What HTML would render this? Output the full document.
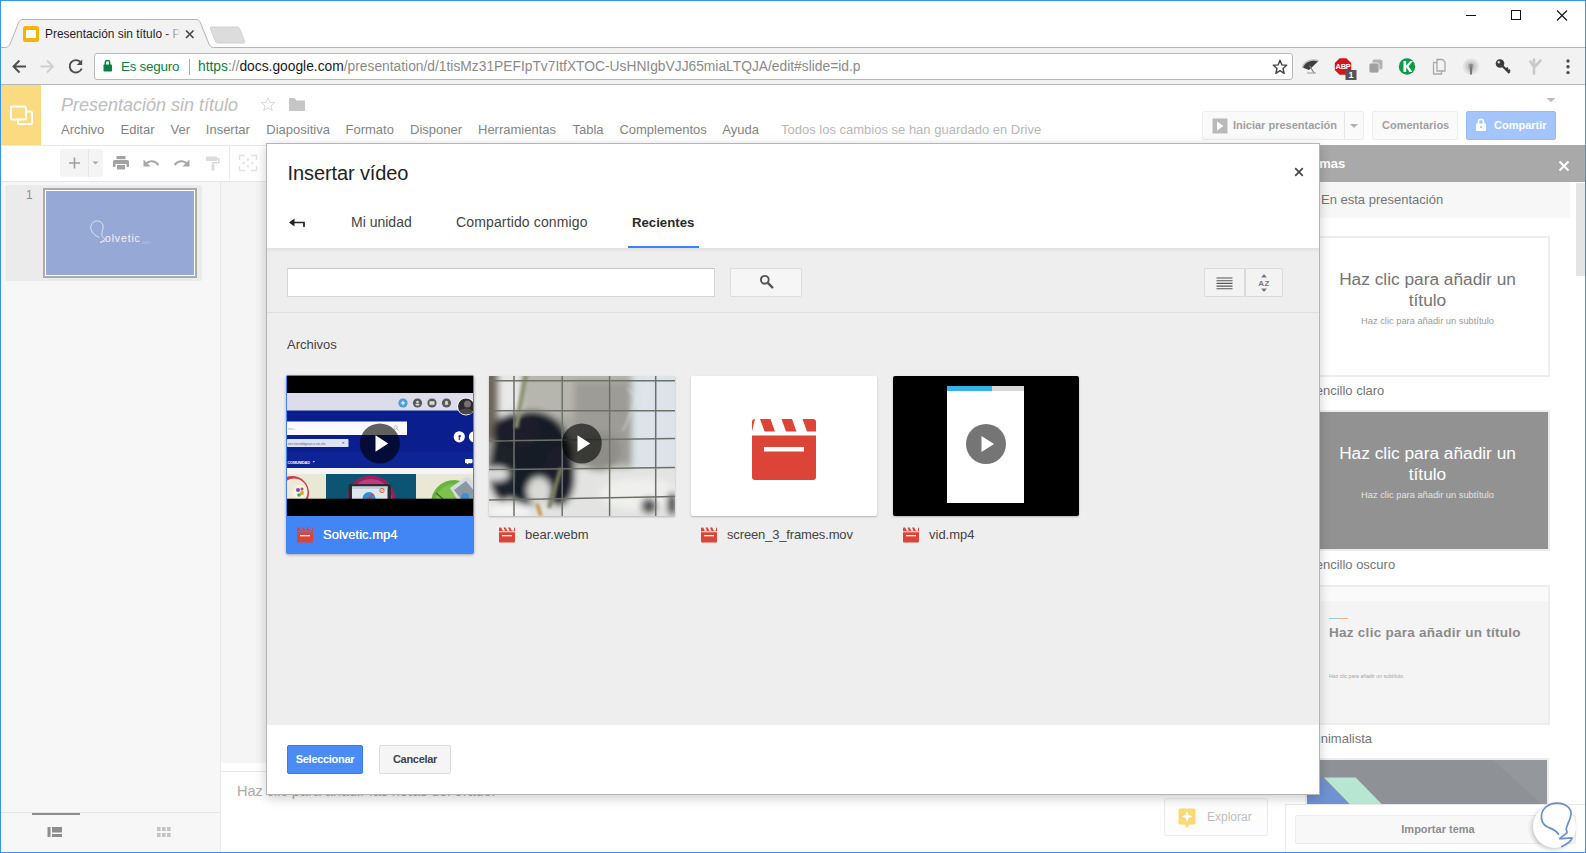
<!DOCTYPE html>
<html lang="es">
<head>
<meta charset="utf-8">
<title>Presentación sin título</title>
<style>
*{box-sizing:border-box;margin:0;padding:0}
html,body{width:1586px;height:853px;overflow:hidden;background:#fff}
body{font-family:"Liberation Sans",sans-serif;position:relative;color:#333}
.abs{position:absolute}
#win{position:absolute;left:0;top:0;width:1586px;height:853px;border:1px solid #3694ec;overflow:hidden;background:#fff}
/* chrome */
#tabstrip{left:0;top:0;width:1584px;height:46px;background:#fff}
#chrometb{left:0;top:46px;width:1584px;height:38px;background:#f2f2f2;border-bottom:1px solid #b8b6b8}
#urlbox{left:93px;top:52px;width:1199px;height:27px;background:#fff;border:1px solid #b9b9b9;border-radius:3px}
.ut{position:absolute;top:4px;font-size:14.5px;line-height:17px;white-space:nowrap}
/* app */
#apphead{left:0;top:84px;width:1584px;height:61px;background:#fff}
#logo{left:0;top:84px;width:40px;height:60px;background:#fbdb81}
.menu{position:absolute;top:122px;font-size:13px;line-height:14px;color:#838383;white-space:nowrap}
#tb{left:0;top:144px;width:1584px;height:37px;background:#fff;border-top:1px solid #e8e8e8;border-bottom:1px solid #e6e6e6}
#film{left:0;top:181px;width:220px;height:630px;background:#f7f7f7;border-right:1px solid #e9e9e9}
#filmfoot{left:0;top:811px;width:220px;height:41px;background:#f7f7f7;border-top:1px solid #e4e4e4;border-right:1px solid #e9e9e9}
#canvas{left:220px;top:181px;width:1100px;height:581px;background:#f5f5f5}
#notes{left:220px;top:770px;width:1075px;height:82px;background:#fff;border-top:1px solid #e8e8e8}
.hbtn{top:110px;height:29px;background:#fafafa;border:1px solid #ececec;border-radius:2px;font-size:11px;font-weight:bold;color:#a0a0a0;line-height:14px;white-space:nowrap}
/* themes */
#themes{left:1295px;top:144px;width:290px;height:708px;background:#fff}
#thhead{left:1295px;top:144px;width:290px;height:37px;background:#a9a9a9}
.thlbl{position:absolute;font-size:12.5px;color:#757575;white-space:nowrap}
.thumb{position:absolute;border:2px solid #ededed}
.tt{position:absolute;left:0;width:100%;text-align:center;font-size:17.300px;line-height:20.700px;white-space:nowrap}
.ts{position:absolute;left:0;width:100%;text-align:center;font-size:9.300px;line-height:11px;white-space:nowrap}
/* dialog */
#dlg{left:265px;top:142px;width:1054px;height:652px;background:#fff;border:1px solid #b5b5b5;box-shadow:0 3px 11px rgba(0,0,0,.2)}
#dlgbody{left:0;top:104px;width:1052px;height:477px;background:#eeeeee}
.dtab{position:absolute;top:70px;font-size:14px;line-height:16px;color:#444;white-space:nowrap}
.card{position:absolute;top:233px;width:186px}
.cardlbl{position:absolute;font-size:13px;line-height:16px;color:#444;white-space:nowrap}
</style>
</head>
<body>
<div id="win">
<!-- CHROME -->
<div id="tabstrip" class="abs"></div>
<div id="chrometb" class="abs"></div>
<div class="abs" style="left:259px;top:46px;width:1325px;height:1px;background:#b4b4b4"></div>
<svg class="abs" style="left:0;top:18px" width="260" height="29" viewBox="0 0 260 29">
<path d="M0 28.5 H4.5 C7 28.5 8 27 9 25 L17.5 4 C18.5 1.5 19.5 0.5 22 0.5 H195 C197.5 0.5 198.500 1.5 199.5 4 L208 25 C209 27 210 28.5 212.5 28.500 H260 V30 H0 Z" fill="#f2f2f2" stroke="#b4b4b4" stroke-width="1"/>
<path d="M210.500 8 H236 C237.500 8 238 8.500 238.800 10 L243.500 22 C244 23.500 243.500 24 242 24 H217 C215.500 24 215 23.500 214.300 22 L209.500 10 C209 8.500 209.300 8 210.500 8 Z" fill="#dcdcdc" stroke="#d2d2d2" stroke-width="1"/>
<rect x="22" y="7" width="16" height="16" rx="2.500" fill="#f4b400"/>
<rect x="25" y="11" width="10" height="8" fill="#fff"/>
<path d="M185 11.500 L192.500 19 M192.500 11.500 L185 19" stroke="#4a4a4a" stroke-width="1.700" fill="none"/>
</svg>
<div class="abs" style="left:44px;top:25px;width:136px;height:16px;overflow:hidden;font-size:11.900px;line-height:16px;white-space:nowrap;color:#1f1f1f">Presentación sin título - Presentaciones de Google</div>
<div class="abs" style="left:164px;top:24px;width:18px;height:18px;background:linear-gradient(90deg,rgba(242,242,242,0),#f2f2f2 85%)"></div>
<!-- window controls -->
<svg class="abs" style="left:1440px;top:0" width="144" height="30" viewBox="0 0 144 30">
<path d="M25 14.500 H35" stroke="#111" stroke-width="1" fill="none"/>
<rect x="70.500" y="9.500" width="9" height="9" stroke="#111" stroke-width="1" fill="none"/>
<path d="M116 9.500 L126 19.500 M126 9.500 L116 19.500" stroke="#111" stroke-width="1.100" fill="none"/>
</svg>
<!-- nav buttons -->
<svg class="abs" style="left:0;top:52px" width="94" height="28" viewBox="0 0 94 28">
<path d="M25 13.500 H12.500 M18.500 7.500 L12.500 13.500 L18.500 19.500" stroke="#4d4d4d" stroke-width="1.900" fill="none"/>
<path d="M39.500 13.500 H52 M46 7.500 L52 13.500 L46 19.500" stroke="#cfcfcf" stroke-width="1.900" fill="none"/>
<path d="M79.500 9.200 A6.200 6.200 0 1 0 80.700 15.500" stroke="#4d4d4d" stroke-width="1.900" fill="none"/>
<path d="M81.200 6.500 V12 H75.700 Z" fill="#4d4d4d"/>
</svg>
<div id="urlbox" class="abs">
<svg class="abs" style="left:7px;top:5px" width="12" height="14" viewBox="0 0 12 14"><path d="M3.300 6 V3.800 A2.200 2.200 0 0 1 7.700 3.800 V6" stroke="#0b8043" stroke-width="1.500" fill="none"/><rect x="1.500" y="5.500" width="8.500" height="7" rx="0.800" fill="#0b8043"/></svg>
<span class="ut" style="left:26px;color:#0b8043;font-size:13.500px;letter-spacing:-0.300px">Es seguro</span>
<div class="abs" style="left:94px;top:5px;width:1px;height:16px;background:#b0b0b0"></div>
<span class="ut" id="url" style="left:103px;font-size:13.800px;color:#8a8a8a"><span style="color:#0b8043">https</span>://<span style="color:#1a1a1a">docs.google.com</span>/presentation/d/1tisMz31PEFIpTv7ItfXTOC-UsHNIgbVJJ65miaLTQJA/edit#slide=id.p</span>
<svg class="abs" style="left:1176px;top:4px" width="18" height="18" viewBox="0 0 18 18"><path d="M9 2.300 L10.900 6.900 L15.700 7.300 L12 10.500 L13.200 15.300 L9 12.700 L4.800 15.300 L6 10.500 L2.300 7.300 L7.100 6.900 Z" stroke="#444" stroke-width="1.400" fill="none" stroke-linejoin="round"/></svg>
</div>
<!-- extensions -->
<svg class="abs" style="left:1295px;top:52px" width="289" height="30" viewBox="0 0 289 30">
<!-- umbrella -->
<g transform="translate(14,13.500)">
<path d="M-7.500 1 C-6 -5 2 -8 8.500 -5.500 L-1 3.500 Z" fill="#3d3d3d"/>
<path d="M-7.500 1 C-6 -5 2 -8 8.500 -5.500" stroke="#bbb" stroke-width="1.500" fill="none"/>
<path d="M-0.500 -1 L4 6.500" stroke="#8a7a6a" stroke-width="1.200"/>
<path d="M-3 6.500 H6" stroke="#999" stroke-width="1"/>
</g>
<!-- ABP -->
<g transform="translate(47,13.500)">
<path d="M-3.400 -8.200 H3.400 L8.200 -3.400 V3.400 L3.400 8.200 H-3.400 L-8.200 3.400 V-3.400 Z" fill="#d7141a"/>
<text x="0" y="2.800" font-family="Liberation Sans, sans-serif" font-size="7.500" font-weight="bold" fill="#fff" text-anchor="middle" letter-spacing="-0.300">ABP</text>
<rect x="2.500" y="3.500" width="11" height="10" fill="#555"/>
<text x="8" y="11.800" font-family="Liberation Sans, sans-serif" font-size="9" font-weight="bold" fill="#fff" text-anchor="middle">1</text>
</g>
<!-- squares -->
<g transform="translate(79.500,13.500)">
<rect x="-3" y="-7" width="10" height="10" rx="2" fill="#b3b3b3"/>
<rect x="-6.500" y="-3.500" width="10" height="10" rx="2" fill="#a0a0a0" stroke="#f2f2f2" stroke-width="0.800"/>
</g>
<!-- K -->
<g transform="translate(111,13.500)">
<circle r="8.200" fill="#0a9a48"/>
<path d="M-3.500 -5.500 H-0.800 V-0.800 L3.200 -5.500 H6 L1.500 -0.300 L5.500 5.500 H2.500 L-0.800 0.800 V5.500 H-3.500 Z" fill="#fff"/>
</g>
<!-- docs -->
<g transform="translate(143,13.500)" fill="none" stroke="#a9a9a9" stroke-width="1.300">
<path d="M-2 -7 H3.500 L6 -4.500 V4.500 H-2 Z" fill="#f2f2f2"/>
<path d="M-5.500 -4 H-2 M-5.500 -4 V7.500 H2.500 V4.500"/>
</g>
<!-- podcast -->
<g transform="translate(175,13.500)">
<circle r="8" fill="#e0e0e0"/><circle r="5.500" fill="#cdcdcd"/><circle r="3.200" fill="#b5b5b5"/>
<path d="M-1.300 0 H1.300 L1 8 H-1 Z" fill="#777"/><circle cy="-1" r="1.800" fill="#888"/>
</g>
<!-- key -->
<g transform="translate(207,13.500)">
<circle cx="-3" cy="-3" r="4.300" fill="#3c3c3c"/><circle cx="-4.200" cy="-4.200" r="1.200" fill="#ddd"/>
<path d="M-0.500 -0.500 L6.500 6.500 M3 3 L5 1.500 M5 5 L7 3.500" stroke="#3c3c3c" stroke-width="2.200" fill="none"/>
</g>
<!-- Y -->
<g transform="translate(239,13.500)" stroke="#c9c9c9" stroke-width="2.600" fill="none" stroke-linecap="round">
<path d="M-4.500 -5 L-1 0.500 V7 M5.500 -6 L-0.500 0.500 M-1 -7 V-1"/>
</g>
<!-- dots -->
<g fill="#4d4d4d"><circle cx="272" cy="8" r="1.700"/><circle cx="272" cy="13.800" r="1.700"/><circle cx="272" cy="19.600" r="1.700"/></g>
</svg>
<!-- APP -->
<div id="apphead" class="abs"></div>
<div id="logo" class="abs"></div>
<svg class="abs" style="left:0;top:84px" width="40" height="60" viewBox="0 0 40 60"><rect x="17" y="26.500" width="14" height="12.500" rx="1.500" fill="none" stroke="#fff" stroke-width="2"/><rect x="10" y="21.500" width="15" height="13" rx="1.500" fill="#fbdb81" stroke="#fff" stroke-width="2"/></svg>
<div class="abs" style="left:60px;top:94px;font-size:18px;line-height:21px;font-style:italic;color:#bdbdbd;white-space:nowrap">Presentación sin título</div>
<svg class="abs" style="left:258px;top:94px" width="50" height="20" viewBox="0 0 50 20"><path d="M9 2.500 L10.800 7.300 L15.800 7.500 L11.900 10.700 L13.200 15.600 L9 12.800 L4.800 15.600 L6.100 10.700 L2.200 7.500 L7.200 7.300 Z" stroke="#d9d9d9" stroke-width="1" fill="none"/><path d="M30 3 H35.500 L37.500 5.500 H46 V16 H30 Z" fill="#c6c6c6"/></svg>
<span class="menu" style="left:60px">Archivo</span><span class="menu" style="left:119.5px">Editar</span><span class="menu" style="left:169.5px">Ver</span><span class="menu" style="left:204.8px">Insertar</span><span class="menu" style="left:265.3px">Diapositiva</span><span class="menu" style="left:344.5px">Formato</span><span class="menu" style="left:409px">Disponer</span><span class="menu" style="left:477px">Herramientas</span><span class="menu" style="left:571.5px">Tabla</span><span class="menu" style="left:618.4px">Complementos</span><span class="menu" style="left:721.3px">Ayuda</span>
<span class="menu" style="left:780px;color:#b7b7b7">Todos los cambios se han guardado en Drive</span>
<svg class="abs" style="left:1544px;top:96px" width="12" height="6" viewBox="0 0 12 6"><path d="M1.500 1 H10.500 L6 5.200 Z" fill="#bdbdbd"/></svg>
<div class="hbtn abs" style="left:1201px;width:162px"><svg class="abs" style="left:9px;top:6px" width="16" height="16" viewBox="0 0 16 16"><rect width="15" height="15" x="0.500" y="0.500" fill="#b9b9b9"/><path d="M5 3.500 L11.500 8 L5 12.500 Z" fill="#fff"/></svg><span style="position:absolute;left:30px;top:6px">Iniciar presentación</span><i style="position:absolute;left:141px;top:0;width:1px;height:27px;background:#e6e6e6"></i><svg class="abs" style="left:146px;top:11px" width="10" height="6" viewBox="0 0 10 6"><path d="M1 1 H9 L5 5 Z" fill="#b0b0b0"/></svg></div>
<div class="hbtn abs" style="left:1371px;width:86px"><span style="position:absolute;left:9px;top:6px">Comentarios</span></div>
<div class="abs" style="left:1465px;top:110px;width:90px;height:29px;background:#a3c5fb;border:1px solid #9dbcf3;border-radius:2px"><svg class="abs" style="left:8px;top:6px" width="12" height="14" viewBox="0 0 12 14"><path d="M3.500 6 V3.800 A2.500 2.500 0 0 1 8.500 3.800 V6" stroke="#fff" stroke-width="1.600" fill="none"/><rect x="1" y="5.500" width="10" height="7.500" rx="1" fill="#fff"/><circle cx="6" cy="9.200" r="1.100" fill="#a3c5fb"/></svg><span style="position:absolute;left:27px;top:7px;font-size:11px;font-weight:bold;color:#fff;line-height:13px">Compartir</span></div>
<div id="tb" class="abs"></div>
<div class="abs" style="left:59px;top:148px;width:43px;height:28px;background:#f4f4f4;border-radius:2px"></div>
<div class="abs" style="left:87px;top:148px;width:1px;height:28px;background:#e6e6e6"></div>
<svg class="abs" style="left:59px;top:148px;overflow:visible" width="210" height="28" viewBox="0 0 210 28">
<path d="M9 14 H20 M14.500 8.500 V19.500" stroke="#9e9e9e" stroke-width="1.600" fill="none"/>
<path d="M32.500 12.500 H38.500 L35.500 15.500 Z" fill="#a8a8a8"/>
<!-- print -->
<g fill="#a3a3a3"><rect x="56.500" y="7" width="9" height="3.200"/><path d="M54.500 11 H67.500 A1.500 1.500 0 0 1 69 12.500 V18 H66.500 V15 H55.500 V18 H53 V12.500 A1.500 1.500 0 0 1 54.500 11 Z"/><rect x="57" y="16" width="8" height="4.500"/></g>
<!-- undo -->
<path d="M85 16.500 C88 11.500 94 10.500 98.500 16" stroke="#a8a8a8" stroke-width="2" fill="none"/><path d="M83.500 10.500 V17.500 H90.500 Z" fill="#a8a8a8"/>
<!-- redo -->
<path d="M128 16.500 C125 11.500 119 10.500 114.500 16" stroke="#a8a8a8" stroke-width="2" fill="none"/><path d="M129.500 10.500 V17.500 H122.500 Z" fill="#a8a8a8"/>
<!-- paint -->
<g fill="#dcdcdc"><rect x="146" y="7.500" width="11" height="4.500"/><path d="M157 9 H159.500 V14.500 H153.500 V16 H152 V13 H158 V10.500 H157 Z"/><rect x="151.500" y="15.500" width="3" height="6"/></g>
<path d="M169.500 -3 V31" stroke="#ececec" stroke-width="1"/>
<g transform="translate(-1,0)"><g stroke="#e2e2e2" stroke-width="1.400" fill="none"><path d="M180.500 11 V6.500 H186 M192 6.500 H197.500 V11 M197.500 17 V21.500 H192 M186 21.500 H180.500 V17"/></g>
<g fill="#e2e2e2"><path d="M189 9 L191 11.500 H187 Z"/><path d="M189 19 L191 16.500 H187 Z"/><path d="M183 14 L185.500 12 V16 Z"/><path d="M195 14 L192.500 12 V16 Z"/></g></g>
</svg>
<div id="film" class="abs"></div>
<div class="abs" style="left:4px;top:184px;width:197px;height:96px;background:#ebebeb;border-radius:2px"></div>
<div class="abs" style="left:25px;top:187px;font-size:12px;line-height:14px;color:#8c8c8c">1</div>
<div class="abs" style="left:42px;top:187px;width:154px;height:90px;background:#96a8d6;border:2px solid #ababab;outline:0"><div style="position:absolute;left:0;top:0;right:0;bottom:0;border:1px solid #fff"></div>
<svg class="abs" style="left:0;top:0" width="150" height="87" viewBox="0 0 150 87"><path d="M54.500 47.500 C50 46 44.500 41 46 35.500 C47.500 30 55 29.500 57.500 34 C59.500 38 56 42 57 46 C57.500 48.500 61 47.500 59.500 50 L55 52.500 L60.500 51" stroke="#e4e9f6" stroke-width="0.900" fill="none"/><text x="60" y="51.500" font-family="Liberation Sans, sans-serif" font-size="10.500" fill="#f1f4fb" letter-spacing="0.850">olvetic</text><text x="95.500" y="54" font-family="Liberation Sans, sans-serif" font-size="4.500" fill="#b9c5e6">.com</text></svg></div>
<div id="filmfoot" class="abs"></div>
<div class="abs" style="left:31px;top:812px;width:48px;height:2px;background:#8d8d8d"></div>
<svg class="abs" style="left:40px;top:822px" width="140" height="20" viewBox="0 0 140 20"><g fill="#8d8d8d"><rect x="6.500" y="4" width="3" height="10"/><rect x="11" y="4" width="10" height="5.500"/><rect x="11" y="11" width="10" height="3"/></g><g fill="#c4c4c4"><rect x="116" y="4" width="3.600" height="4"/><rect x="121" y="4" width="3.600" height="4"/><rect x="126" y="4" width="3.600" height="4"/><rect x="116" y="10" width="3.600" height="4"/><rect x="121" y="10" width="3.600" height="4"/><rect x="126" y="10" width="3.600" height="4"/></g></svg>
<div id="canvas" class="abs"></div>
<div id="notes" class="abs"><span style="position:absolute;left:16px;top:11px;font-size:14.500px;line-height:16px;color:#a9a9a9;white-space:nowrap">Haz clic para añadir las notas del orador</span></div>
<div class="abs" style="left:1163px;top:797px;width:104px;height:38px;background:#fdfdfd;border:1px solid #e9e9e9;border-radius:3px"><svg class="abs" style="left:12px;top:8px" width="22" height="24" viewBox="0 0 22 24"><path d="M3 1.500 H17 A1.500 1.500 0 0 1 18.500 3 V16 A1.500 1.500 0 0 1 17 17.500 H12.500 L10 21 L7.500 17.500 H3 A1.500 1.500 0 0 1 1.500 16 V3 A1.500 1.500 0 0 1 3 1.500 Z" fill="#fbd978"/><path d="M10 4 L11.500 8 L15.500 9.500 L11.500 11 L10 15 L8.500 11 L4.500 9.500 L8.500 8 Z" fill="#fff"/></svg><span style="position:absolute;left:42px;top:11px;font-size:12px;line-height:15px;color:#bdbdbd">Explorar</span></div>
<!-- THEMES -->
<div id="themes" class="abs"></div>
<div id="thhead" class="abs"><span style="position:absolute;left:9px;top:11px;font-size:13px;line-height:15px;font-weight:bold;color:#fff">Temas</span><svg class="abs" style="left:262px;top:15px" width="12" height="12" viewBox="0 0 12 12"><path d="M1.500 1.500 L10.500 10.500 M10.500 1.500 L1.500 10.500" stroke="#fff" stroke-width="2" fill="none"/></svg></div>
<div class="abs" style="left:1286px;top:181px;width:283px;height:36px;background:#f7f7f7"></div>
<span class="thlbl" style="left:1320px;top:191px;font-size:13px;line-height:15px">En esta presentación</span>
<div class="abs" style="left:1575px;top:182px;width:9px;height:93px;background:#e4e4e4"></div>
<div class="thumb" style="left:1304px;top:235px;width:245px;height:141px;background:#fff"><div class="tt" style="top:31px;color:#747474">Haz clic para añadir un<br>título</div><div class="ts" style="top:78px;color:#9a9a9a">Haz clic para añadir un subtítulo</div></div>
<span class="thlbl" style="left:1306px;top:382px;font-size:13px;line-height:15px">Sencillo claro</span>
<div class="thumb" style="left:1304px;top:409px;width:245px;height:141px;background:#929292"><div class="tt" style="top:31px;color:#fff">Haz clic para añadir un<br>título</div><div class="ts" style="top:78px;color:#e3e3e3">Haz clic para añadir un subtítulo</div></div>
<span class="thlbl" style="left:1306px;top:556px;font-size:13px;line-height:15px">Sencillo oscuro</span>
<div class="thumb" style="left:1304px;top:584px;width:245px;height:140px;background:#f4f4f4"><div style="position:absolute;left:0;top:0;width:100%;height:14px;background:#fafafa"></div><div style="position:absolute;left:22px;top:31px;width:19px;height:1px;background:linear-gradient(90deg,#8fd0cc 55%,#f0b48a 55%)"></div><div style="position:absolute;left:22px;top:38px;font-size:13.500px;line-height:16px;font-weight:bold;color:#8b8b8b;white-space:nowrap;letter-spacing:0.270px">Haz clic para añadir un título</div><div style="position:absolute;left:22px;top:86px;font-size:5.200px;line-height:6px;color:#a5a5a5;white-space:nowrap">Haz clic para añadir un subtítulo</div></div>
<span class="thlbl" style="left:1306px;top:730px;font-size:13px;line-height:15px">Minimalista</span>
<div class="thumb" style="left:1304px;top:757px;width:244px;height:60px;background:#8e9195;overflow:hidden"><svg class="abs" style="left:0;top:0" width="241" height="56" viewBox="0 0 241 56"><path d="M186 0 H241 V50 Z" fill="#94979b"/><path d="M0 8 L12 15 L44 45.500 H0 Z" fill="#6f92d2"/><path d="M16.800 17.500 H48.700 L76.600 46 H44.700 Z" fill="#b7e6d3"/></svg></div>
<div class="abs" style="left:1284px;top:803px;width:300px;height:49px;background:#fff;border-top:1px solid #e8e8e8;border-left:1px solid #ebebeb"></div>
<div class="abs" style="left:1294px;top:814px;width:281px;height:29px;background:#f8f8f8;border:1px solid #ececec;border-radius:2px;text-align:center;font-size:11px;line-height:27px;font-weight:bold;color:#8d8d8d;padding-left:5px">Importar tema</div>
<div class="abs" style="left:1532px;top:804px;width:43px;height:43px;border-radius:22px;background:#fff;box-shadow:-1.500px 1.500px 4px rgba(0,0,0,.22)"></div>
<svg class="abs" style="left:1529px;top:797px" width="52" height="54" viewBox="0 0 52 54"><path d="M28.500 36.300 C26 32 21 30.500 17.500 29 C13 27 10.800 22 11.500 17 C12.500 10 19 5 27.400 5.200 C36 5.500 41.500 10.500 41 16.500 C40.500 22 36.500 27 36.300 31 C36.200 33 37.500 34 37 34.800 L29.600 40.700 C33 41 38 39.500 42.100 40 C41 43.500 36 46.500 31.800 48.500" stroke="#6a8fcb" stroke-width="1.700" fill="none" stroke-linecap="round" stroke-linejoin="round"/></svg>
<!-- DIALOG -->
<div id="dlg" class="abs">
<div class="abs" style="left:20.500px;top:17px;font-size:20px;line-height:24px;color:#222;white-space:nowrap;letter-spacing:-0.100px">Insertar vídeo</div>
<svg class="abs" style="left:1026px;top:22px" width="12" height="12" viewBox="0 0 12 12"><path d="M2.200 2.200 L9.800 9.800 M9.800 2.200 L2.200 9.800" stroke="#4a4a4a" stroke-width="1.800" fill="none"/></svg>
<svg class="abs" style="left:20px;top:70px" width="20" height="16" viewBox="0 0 20 16"><path d="M3.500 8.500 H17 V13" stroke="#222" stroke-width="1.700" fill="none"/><path d="M2 8.500 L7.500 4.500 V12.500 Z" fill="#222"/></svg>
<span class="dtab" style="left:84px">Mi unidad</span>
<span class="dtab" style="left:189px;letter-spacing:0.140px">Compartido conmigo</span>
<span class="dtab" style="left:365px;top:71px;font-weight:bold;font-size:13.200px;color:#2a2a2a">Recientes</span>
<div class="abs" style="left:361px;top:102px;width:71px;height:2px;background:#3b82f6"></div>
<div id="dlgbody" class="abs"><div class="abs" style="left:0;top:1px;width:100%;height:476px">
<div class="abs" style="left:0;top:-1px;width:100%;height:5px;background:linear-gradient(#e0e0e0,#eeeeee)"></div>
<div class="abs" style="left:20px;top:19px;width:428px;height:29px;background:#fff;border:1px solid #d6d6d6;border-top-color:#c4c4c4"></div>
<div class="abs" style="left:463px;top:19px;width:72px;height:29px;background:#f6f6f6;border:1px solid #dcdcdc;border-radius:2px"><svg class="abs" style="left:27px;top:4px" width="18" height="18" viewBox="0 0 18 18"><circle cx="6.800" cy="6.800" r="3.900" stroke="#555" stroke-width="1.900" fill="none"/><path d="M9.800 9.800 L14.300 14.300" stroke="#555" stroke-width="2.400" stroke-linecap="round"/></svg></div>
<div class="abs" style="left:937px;top:19px;width:41px;height:29px;background:#f3f3f3;border:1px solid #dadada;border-radius:2px 0 0 2px"><svg class="abs" style="left:11px;top:8px" width="17" height="13" viewBox="0 0 17 13"><path d="M0.500 1 H16.500 M0.500 3.700 H16.500 M0.500 6.400 H16.500 M0.500 9.100 H16.500 M0.500 11.800 H16.500" stroke="#555" stroke-width="1.100"/></svg></div>
<div class="abs" style="left:978px;top:19px;width:38px;height:29px;background:#f3f3f3;border:1px solid #dadada;border-radius:0 2px 2px 0"><svg class="abs" style="left:8px;top:3px" width="20" height="22" viewBox="0 0 20 22"><path d="M10 2 L12.800 5.500 H7.200 Z M10 20 L12.800 16.500 H7.200 Z" fill="#777"/><text x="10" y="14" text-anchor="middle" font-family="Liberation Sans, sans-serif" font-size="8" font-weight="bold" fill="#777" letter-spacing="0.500">AZ</text></svg></div>
<div class="abs" style="left:0;top:63px;width:100%;height:1px;background:#dfdfdf"></div>
<div class="abs" style="left:20px;top:88px;font-size:13px;line-height:15px;color:#444">Archivos</div>
<!-- card1 -->
<div class="abs" style="left:19px;top:126px;width:188px;height:179px;background:#4285f4;border-radius:2px;box-shadow:0 1px 3px rgba(0,0,0,.3)"></div>
<div class="abs" id="c1" style="left:20px;top:127px;width:186px;height:140px;background:#000;overflow:hidden">
<svg class="abs" style="left:0;top:0" width="186" height="140" viewBox="0 0 186 140">
<rect x="0" y="17" width="186" height="18" fill="#dcdde9"/>
<rect x="0" y="34.500" width="186" height="58" fill="#0a1e8e"/>
<rect x="0" y="76" width="186" height="16" fill="#0d2496"/>
<rect x="0" y="92" width="186" height="6.500" fill="#f4f4f6"/>
<rect x="0" y="98" width="186" height="25" fill="#e9e8d4"/>
<circle cx="116" cy="27" r="4.600" fill="#4b9bd6"/><path d="M116 24.800 V29.200 M113.800 27 H118.200" stroke="#fff" stroke-width="1"/>
<circle cx="130.500" cy="27" r="4.600" fill="#595959"/><circle cx="145" cy="27" r="4.600" fill="#595959"/><circle cx="159.500" cy="27" r="4.600" fill="#595959"/>
<circle cx="130.500" cy="26" r="1.300" fill="#ddd"/><rect x="128.500" y="27.800" width="4" height="1.800" rx="0.800" fill="#ddd"/>
<rect x="142.500" y="25.200" width="5" height="3.600" rx="0.500" fill="#ddd"/>
<path d="M157.500 28.800 H161.500 L160.800 27.800 V26 A1.300 1.300 0 0 0 158.200 26 V27.800 Z" fill="#ddd"/>
<circle cx="179" cy="30.500" r="9" fill="#fff"/><circle cx="179" cy="30.500" r="8" fill="#2b2b2e"/><circle cx="180.500" cy="28" r="3.500" fill="#77706b"/><path d="M172.500 35 C175 31.500 184 31.500 186 36 L183 38 H176 Z" fill="#4a4644"/>
<rect x="0" y="45.500" width="120" height="13.500" fill="#fbfbfd"/>
<circle cx="108.800" cy="51.500" r="1.600" stroke="#999" stroke-width="0.600" fill="none"/><path d="M110 52.800 L111.500 54.500" stroke="#999" stroke-width="0.600"/>
<text x="1" y="54" font-family="Liberation Sans, sans-serif" font-size="3.600" fill="#aaa">nes...</text>
<rect x="0" y="63" width="61.500" height="8" rx="0.800" fill="#dde3f3"/>
<text x="1" y="68.600" font-family="Liberation Sans, sans-serif" font-size="3.300" fill="#556">nes tecnológicas a un clic</text><path d="M55.300 65.800 L57.300 67.800 M57.300 65.800 L55.300 67.800" stroke="#445" stroke-width="0.500"/>
<text x="0.500" y="87.500" font-family="Liberation Sans, sans-serif" font-size="3.800" font-weight="bold" fill="#fff" letter-spacing="-0.150">COMUNIDAD</text><path d="M25.500 85.200 H28 L26.750 86.600 Z" fill="#fff"/>
<circle cx="172.300" cy="60.800" r="5.600" fill="#fff"/><text x="172.300" y="63.800" text-anchor="middle" font-family="Liberation Sans, sans-serif" font-size="8" font-weight="bold" fill="#0a1e8e">f</text>
<circle cx="187.500" cy="60.800" r="5.600" fill="#fff"/>
<path d="M179 83 H184.500 A1 1 0 0 1 185.500 84 V86.300 A1 1 0 0 1 184.500 87.300 H181.500 L180 88.600 V87.300 H179 A1 1 0 0 1 178 86.300 V84 A1 1 0 0 1 179 83 Z" fill="#fff"/>
<!-- bottom content -->
<circle cx="5" cy="117" r="17" fill="#cf3a4b"/><circle cx="7" cy="116" r="13.500" fill="#efe9d6"/><circle cx="13" cy="116" r="7" fill="#f7f3e6"/><circle cx="11" cy="114" r="2" fill="#7a4fb0"/><circle cx="15" cy="117" r="2" fill="#e6a326"/><circle cx="12" cy="119" r="1.800" fill="#3ba55a"/><circle cx="15" cy="113" r="1.500" fill="#d8414e"/>
<rect x="39" y="98" width="90" height="25" fill="#0c5572"/>
<circle cx="84" cy="124" r="24.500" fill="#9c1f5d"/><circle cx="84" cy="124" r="21" fill="#c23b7c"/>
<rect x="61.500" y="108" width="42.500" height="16" rx="1.500" fill="#2c2c30"/><rect x="65" y="110.500" width="35.500" height="13" fill="#dfe7ee"/><rect x="65" y="110.500" width="35.500" height="2.500" fill="#c5ced8"/>
<circle cx="82" cy="122.500" r="6.500" fill="#2f8fd0"/><path d="M79 125 L86 118" stroke="#e34" stroke-width="1.200"/>
<circle cx="95" cy="114.500" r="2.200" fill="none" stroke="#e0452f" stroke-width="0.800"/><path d="M93.500 116 L96.500 113" stroke="#e0452f" stroke-width="0.700"/>
<circle cx="167" cy="127" r="23" fill="#69b23f"/><circle cx="167" cy="127" r="19" fill="#7cc24a"/><path d="M149 117 L156 123" stroke="#3d6b22" stroke-width="1.200"/>
<path d="M163 112 L178 101.500 C180 100.500 182 101 183 102 L188 108 V123 H170 Z" fill="#d5dbe0"/><path d="M167 114 L179 105 L188 116 V123 H174 Z" fill="#8a97a5"/><circle cx="178" cy="121" r="4" fill="#3d8fcf"/>
<rect x="0" y="122.700" width="186" height="18" fill="#000"/>
<circle cx="92.800" cy="67.500" r="20" fill="#000" fill-opacity="0.620"/><path d="M88.500 59.300 L101.200 67.500 L88.500 75.700 Z" fill="#fff"/>
</svg></div>
<!-- card2 -->
<div class="abs" id="c2" style="left:222px;top:127px;width:186px;height:140px;background:#aeada5;overflow:hidden;box-shadow:0 1px 2px rgba(0,0,0,.25)">
<svg class="abs" style="left:0;top:0" width="186" height="140" viewBox="0 0 186 140">
<defs><filter id="b3" x="-20%" y="-20%" width="140%" height="140%"><feGaussianBlur stdDeviation="3"/></filter><filter id="b1" x="-20%" y="-20%" width="140%" height="140%"><feGaussianBlur stdDeviation="1.500"/></filter><filter id="b0"><feGaussianBlur stdDeviation="0.450"/></filter></defs>
<g filter="url(#b3)">
<rect x="-10" y="-10" width="206" height="160" fill="#a9a8a0"/>
<rect x="30" y="-5" width="115" height="45" fill="#b7b6ae"/>
<rect x="85" y="5" width="60" height="80" fill="#9d9c96"/>
<rect x="143" y="-10" width="55" height="105" fill="#dde4e9"/>
<rect x="10" y="-10" width="22" height="55" fill="#e9e9e9"/>
<rect x="-10" y="-10" width="19" height="75" fill="#6d665b"/>
<rect x="-10" y="92" width="206" height="60" fill="#e3e3e1"/>
<ellipse cx="43" cy="82" rx="41" ry="47" fill="#161a26"/><ellipse cx="14" cy="95" rx="14" ry="30" fill="#1d212c"/>
<ellipse cx="28" cy="55" rx="24" ry="18" fill="#1a1e2b"/>
<ellipse cx="70" cy="100" rx="16" ry="30" fill="#1b1f2a"/>
<ellipse cx="50" cy="115" rx="12" ry="14" fill="#d9d9d6"/>
<ellipse cx="8" cy="98" rx="12" ry="7" fill="#dcdcdc"/>
<ellipse cx="150" cy="118" rx="40" ry="16" fill="#efefee"/>
<ellipse cx="110" cy="75" rx="22" ry="20" fill="#8f8e88"/>
<ellipse cx="160" cy="130" rx="8" ry="8" fill="#555"/>
<ellipse cx="183" cy="128" rx="5" ry="12" fill="#444"/>
<ellipse cx="20" cy="135" rx="22" ry="6" fill="#f5f5f5"/>
</g>
<g filter="url(#b1)"><path d="M37 -2 L27 52" stroke="#8b9172" stroke-width="4.500" fill="none"/><path d="M72 92 L60 132" stroke="#7c7f5c" stroke-width="4" fill="none"/><path d="M158 0 L156 30 M138 12 L148 22 L134 55" stroke="#e8e8e8" stroke-width="1" fill="none"/><path d="M48 128 L52 140" stroke="#b98a2e" stroke-width="3"/></g>
<g filter="url(#b0)" stroke="#6d7269" stroke-width="1.500" fill="none"><path d="M25 0 V140 M73.200 0 V140 M120.600 0 V140 M166.700 0 V140"/><path d="M0 4.700 H186 M0 34.800 H186 M0 65 L186 62.500 M0 93.600 L186 91.500 M0 124 L186 120.500"/></g>
<circle cx="92.800" cy="67.500" r="20" fill="#000" fill-opacity="0.600"/><path d="M88.500 59.300 L101.200 67.500 L88.500 75.700 Z" fill="#fff"/>
</svg></div>
<!-- card3 -->
<div class="abs" id="c3" style="left:424px;top:127px;width:186px;height:140px;background:#fff;border-radius:2px;box-shadow:0 1px 2px rgba(0,0,0,.25)"><svg class="abs" style="left:61px;top:43px" width="64" height="61" viewBox="0 0 64 61"><path d="M3 0 H8 L12.500 12.500 H23 L18.500 0 H29.500 L34 12.500 H44.500 L40 0 H50.500 L55 12.500 H64 V3 A3 3 0 0 0 61 0 H61 L61 0 H3 A3 3 0 0 0 0 3 V12.500 H0 Z" fill="#db4437"/><path d="M0 16.500 H64 V58 A3 3 0 0 1 61 61 H3 A3 3 0 0 1 0 58 Z" fill="#db4437"/><rect x="12" y="28" width="40" height="4.500" fill="#fff"/></svg></div>
<!-- card4 -->
<div class="abs" id="c4" style="left:626px;top:127px;width:186px;height:140px;background:#000;border-radius:2px;overflow:hidden;box-shadow:0 1px 2px rgba(0,0,0,.25)"><div class="abs" style="left:54px;top:10px;width:77px;height:117px;background:#fff"></div><div class="abs" style="left:54px;top:10px;width:45px;height:5px;background:#35b4ea"></div><div class="abs" style="left:99px;top:10px;width:32px;height:5px;background:#d9d9d9"></div><div class="abs" style="left:73px;top:48px;width:40px;height:40px;border-radius:20px;background:#757575"></div><svg class="abs" style="left:73px;top:48px" width="40" height="40" viewBox="0 0 40 40"><path d="M15.500 12 L28 20 L15.500 28 Z" fill="#fff"/></svg></div>
<svg class="abs" style="left:30px;top:278px" width="16" height="16" viewBox="0 0 16 16"><path d="M1 0.500 H2.200 L3.700 3.800 H6 L4.500 0.500 H6.700 L8.200 3.800 H10.500 L9 0.500 H11.200 L12.700 3.800 H15 V0.500 H15 A1 1 0 0 1 16 1.500 V4.200 H0 V1.500 A1 1 0 0 1 1 0.500 Z" fill="#db4437"/><path d="M0 5.200 H16 V14.500 A1 1 0 0 1 15 15.500 H1 A1 1 0 0 1 0 14.500 Z" fill="#db4437"/><rect x="3" y="8" width="10" height="1.300" fill="#fff"/></svg><span class="cardlbl" style="left:56px;top:278px;color:#fff;text-shadow:0 0 0.600px #fff">Solvetic.mp4</span>
<svg class="abs" style="left:232px;top:278px" width="16" height="16" viewBox="0 0 16 16"><path d="M1 0.500 H2.200 L3.700 3.800 H6 L4.500 0.500 H6.700 L8.200 3.800 H10.500 L9 0.500 H11.200 L12.700 3.800 H15 V0.500 H15 A1 1 0 0 1 16 1.500 V4.200 H0 V1.500 A1 1 0 0 1 1 0.500 Z" fill="#db4437"/><path d="M0 5.200 H16 V14.500 A1 1 0 0 1 15 15.500 H1 A1 1 0 0 1 0 14.500 Z" fill="#db4437"/><rect x="3" y="8" width="10" height="1.300" fill="#fff"/></svg><span class="cardlbl" style="left:258px;top:278px">bear.webm</span>
<svg class="abs" style="left:434px;top:278px" width="16" height="16" viewBox="0 0 16 16"><path d="M1 0.500 H2.200 L3.700 3.800 H6 L4.500 0.500 H6.700 L8.200 3.800 H10.500 L9 0.500 H11.200 L12.700 3.800 H15 V0.500 H15 A1 1 0 0 1 16 1.500 V4.200 H0 V1.500 A1 1 0 0 1 1 0.500 Z" fill="#db4437"/><path d="M0 5.200 H16 V14.500 A1 1 0 0 1 15 15.500 H1 A1 1 0 0 1 0 14.500 Z" fill="#db4437"/><rect x="3" y="8" width="10" height="1.300" fill="#fff"/></svg><span class="cardlbl" style="left:460px;top:278px;letter-spacing:-0.150px">screen_3_frames.mov</span>
<svg class="abs" style="left:636px;top:278px" width="16" height="16" viewBox="0 0 16 16"><path d="M1 0.500 H2.200 L3.700 3.800 H6 L4.500 0.500 H6.700 L8.200 3.800 H10.500 L9 0.500 H11.200 L12.700 3.800 H15 V0.500 H15 A1 1 0 0 1 16 1.500 V4.200 H0 V1.500 A1 1 0 0 1 1 0.500 Z" fill="#db4437"/><path d="M0 5.200 H16 V14.500 A1 1 0 0 1 15 15.500 H1 A1 1 0 0 1 0 14.500 Z" fill="#db4437"/><rect x="3" y="8" width="10" height="1.300" fill="#fff"/></svg><span class="cardlbl" style="left:662px;top:278px">vid.mp4</span>
</div></div>
<div class="abs" style="left:20px;top:601px;width:76px;height:29px;background:#4a8bf5;border:1px solid #3b7be6;border-radius:2px;text-align:center;font-size:11px;line-height:27px;font-weight:bold;color:#fff;letter-spacing:-0.300px">Seleccionar</div>
<div class="abs" style="left:112px;top:601px;width:72px;height:29px;background:#f5f5f5;border:1px solid #dcdcdc;border-radius:2px;text-align:center;font-size:11px;line-height:27px;font-weight:bold;color:#444;letter-spacing:-0.300px">Cancelar</div>
</div>
</div>
</body>
</html>
